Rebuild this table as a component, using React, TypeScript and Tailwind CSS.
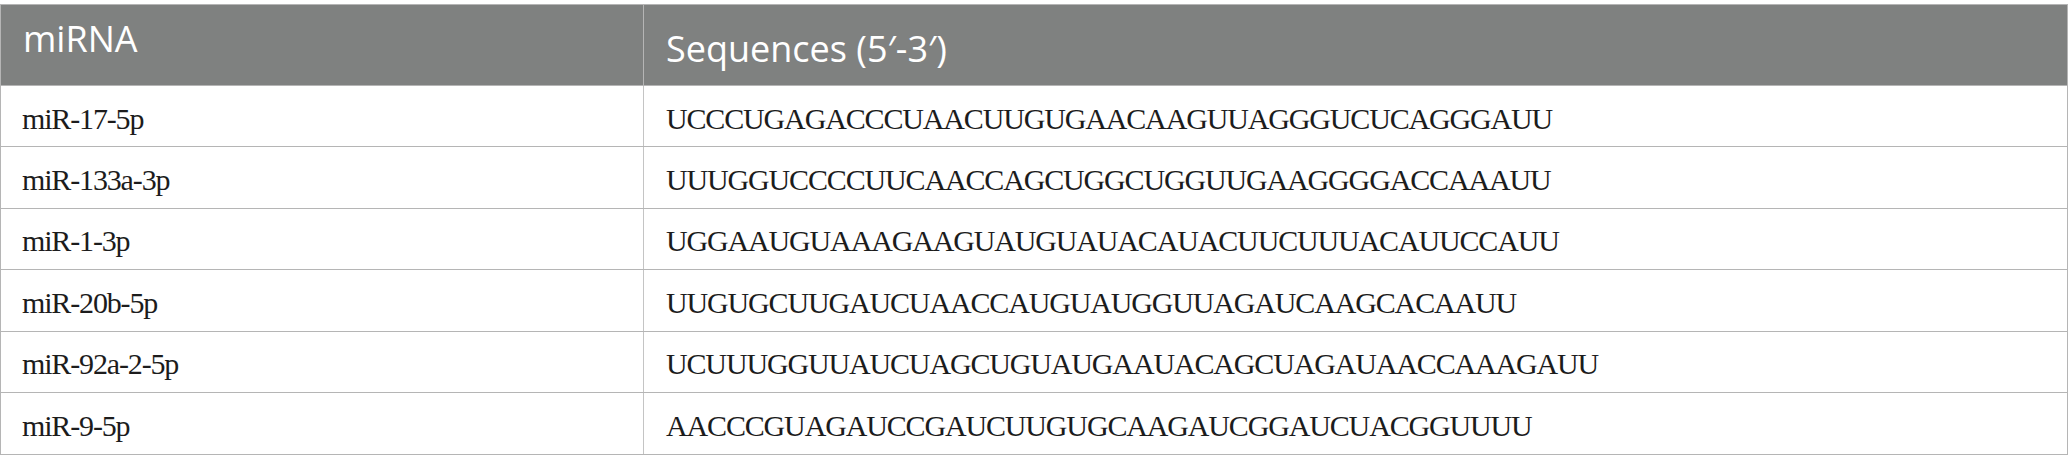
import React from "react";

const rows: [string, string][] = [
  ["miR-17-5p", "UCCCUGAGACCCUAACUUGUGAACAAGUUAGGGUCUCAGGGAUU"],
  ["miR-133a-3p", "UUUGGUCCCCUUCAACCAGCUGGCUGGUUGAAGGGGACCAAAUU"],
  ["miR-1-3p", "UGGAAUGUAAAGAAGUAUGUAUACAUACUUCUUUACAUUCCAUU"],
  ["miR-20b-5p", "UUGUGCUUGAUCUAACCAUGUAUGGUUAGAUCAAGCACAAUU"],
  ["miR-92a-2-5p", "UCUUUGGUUAUCUAGCUGUAUGAAUACAGCUAGAUAACCAAAGAUU"],
  ["miR-9-5p", "AACCCGUAGAUCCGAUCUUGUGCAAGAUCGGAUCUACGGUUUU"],
];

export default function App() {
  return (
    <div className="w-[2068px] h-[473px] bg-white pt-[4px]">
      <div className="border border-[#b5b5b5]">
        {/* header */}
        <div className="grid grid-cols-[643px_1fr] h-[81px] bg-[#7f8180] border-b border-[#b5b5b5] text-white font-['Open_Sans',sans-serif] text-[36px] leading-[48px]">
          <div className="pl-[22px] pt-[10px] border-r border-[#b5b5b5]">miRNA</div>
          <div className="pl-[22px] pt-[20px]">Sequences (5′-3′)</div>
        </div>
        {rows.map(([name, seq], i) => (
          <div
            key={i}
            className={`grid grid-cols-[643px_1fr] h-[61.4px] font-['Liberation_Serif',serif] text-[30px] leading-[33px] tracking-[-1.15px] text-[#1c1c1c] ${
              i < rows.length - 1 ? "border-b border-[#b5b5b5]" : ""
            }`}
          >
            <div className="flex items-center pl-[21px] pt-[4px] border-r border-[#c4c4c4]">{name}</div>
            <div className="flex items-center pl-[22px] pt-[4px]">{seq}</div>
          </div>
        ))}
      </div>
    </div>
  );
}
